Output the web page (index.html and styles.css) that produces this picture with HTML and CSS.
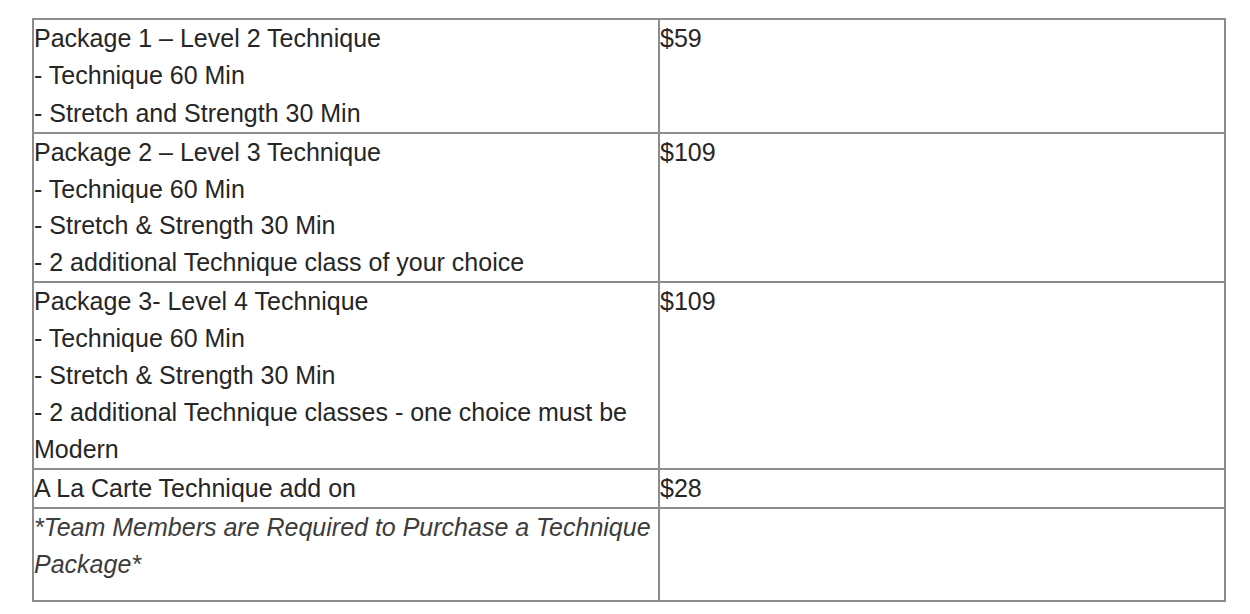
FILE: index.html
```html
<!DOCTYPE html>
<html>
<head>
<meta charset="utf-8">
<link rel="stylesheet" href="styles.css">
</head>
<body>
<table class="prices">
  <tr class="row r1">
    <td class="desc">Package 1 – Level 2 Technique<br>- Technique 60 Min<br>- Stretch and Strength 30 Min</td>
    <td class="price">$59</td>
  </tr>
  <tr class="row r2">
    <td class="desc">Package 2 – Level 3 Technique<br>- Technique 60 Min<br>- Stretch &amp; Strength 30 Min<br>- 2 additional Technique class of your choice</td>
    <td class="price">$109</td>
  </tr>
  <tr class="row r3">
    <td class="desc">Package 3- Level 4 Technique<br>- Technique 60 Min<br>- Stretch &amp; Strength 30 Min<br>- 2 additional Technique classes - one choice must be Modern</td>
    <td class="price">$109</td>
  </tr>
  <tr class="row r4">
    <td class="desc">A La Carte Technique add on</td>
    <td class="price">$28</td>
  </tr>
  <tr class="row r5">
    <td class="desc note">*Team Members are Required to Purchase a Technique Package*</td>
    <td class="price"></td>
  </tr>
</table>
</body>
</html>
```
FILE: styles.css
```css
html, body {
  margin: 0;
  padding: 0;
  background: #ffffff;
}
body {
  padding: 18px 0 0 32px;
}
.prices {
  border-collapse: collapse;
  width: 1194px;
  table-layout: fixed;
  font-family: "Liberation Sans", Arial, sans-serif;
  font-size: 25px;
  line-height: 37px;
  color: #262626;
}
.prices td {
  border: 2px solid #8c8c8c;
  padding: 0;
  vertical-align: top;
}
.desc {
  width: 624px;
}
.r1 td {
  height: 112px;
  line-height: 37.3px;
}
.r2 td {
  line-height: 36.7px;
}
.note {
  font-style: italic;
  color: #3c3c3c;
}
.r5 td {
  height: 91px;
}
```
